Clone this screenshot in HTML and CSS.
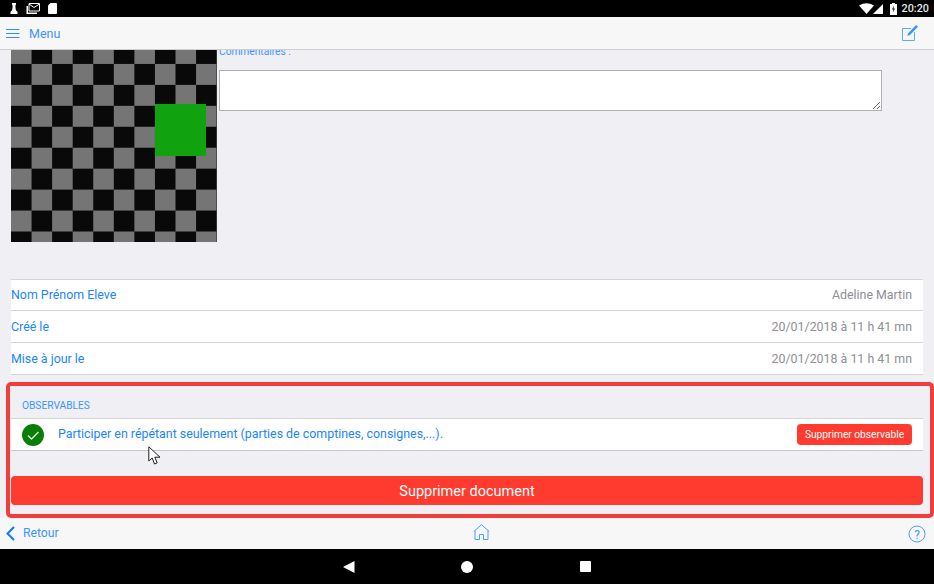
FILE: index.html
```html
<!DOCTYPE html>
<html lang="fr">
<head>
<meta charset="utf-8">
<title>Document</title>
<link rel="stylesheet" href="styles.css">
</head>
<body>
<div class="status">
  <div class="status-left">
    <svg class="ic" width="8" height="11" viewBox="0 0 8 11"><path fill="#fff" d="M2 0h4v1.5l-.7 1.2.5 4.3L7.500 9v2H.5V9l1.700-2 .5-4.300L2 1.500z"/></svg>
    <svg class="ic" width="14" height="11" viewBox="0 0 14 11"><path fill="none" stroke="#fff" d="M3 .5h10.500v7.500H3z"/><path fill="none" stroke="#fff" d="M3 1l5 3.500L13.500 1"/><path fill="#fff" d="M.5 3H2v6.500h9V11H.5z"/></svg>
    <svg class="ic" width="9" height="11" viewBox="0 0 9 11"><path fill="#fff" d="M2.500 0H8a1 1 0 0 1 1 1v9a1 1 0 0 1-1 1H1a1 1 0 0 1-1-1V2.500z"/></svg>
  </div>
  <div class="status-right">
    <svg width="15" height="11" viewBox="0 0 15 11"><path fill="#fff" d="M0 2.500Q7.500-2 15 2.500L7.500 11z"/></svg>
    <svg class="signal" width="10" height="10" viewBox="0 0 10 10"><path fill="#fff" d="M10 0v10H0z"/></svg>
    <svg class="battery" width="7" height="12" viewBox="0 0 7 12"><path fill="#fff" d="M2 0h3v1h2v11H0V1h2z"/><path fill="#222" d="M4 2.500 2 6.500h1.300L3 9.500l2-4H3.700z"/></svg>
    <span class="time">20:20</span>
  </div>
</div>

<header class="topbar">
  <div class="menu">
    <svg class="burger" width="14" height="9" viewBox="0 0 14 9"><path stroke="#2f90ff" fill="none" d="M0 .5h13.500M0 4.500h13.500M0 8.500h13.500"/></svg>
    <span>Menu</span>
  </div>
  <svg class="edit" width="17" height="17" viewBox="0 0 17 17"><path fill="none" stroke="#5aa8ff" d="M10 3.500H1.500v12h12V7"/><path fill="#3a96ff" d="M15 0l2 1.800L9 10l-2.700 1 .9-2.800z"/></svg>
</header>

<main class="content">
  <div class="top">
    <div class="board"><div class="marker"></div></div>
    <div class="comment">
      <label class="comment-label" for="c">Commentaires :</label>
      <textarea id="c" class="comment-input"></textarea>
    </div>
  </div>

  <ul class="info">
    <li class="info-row"><span>Nom Prénom Eleve</span><span class="value">Adeline Martin</span></li>
    <li class="info-row"><span>Créé le</span><span class="value">20/01/2018 à 11 h 41 mn</span></li>
    <li class="info-row"><span>Mise à jour le</span><span class="value">20/01/2018 à 11 h 41 mn</span></li>
  </ul>

  <section class="highlight">
    <h2 class="section-title">OBSERVABLES</h2>
    <div class="obs-row">
      <svg class="check" width="22" height="22" viewBox="0 0 22 22"><circle cx="11" cy="11" r="11" fill="#0a7d0a"/><path d="M6 11.500l3.500 3.500L16.500 8" fill="none" stroke="#d8ecd8" stroke-width="1.300"/></svg>
      <span class="obs-text">Participer en répétant seulement (parties de comptines, consignes,...).</span>
      <button class="obs-btn">Supprimer observable</button>
    </div>
    <svg class="cursor" width="14" height="20" viewBox="0 0 14 20"><path fill="#fff" stroke="#222" d="M.8.800V15l3.400-3 2.300 6 2.700-1.100-2.400-5.700H12z"/></svg>
    <button class="delete-btn">Supprimer document</button>
  </section>
</main>

<footer class="bottombar">
  <div class="back">
    <svg width="9" height="15" viewBox="0 0 9 15"><path d="M8 1 1.500 7.500 8 14" fill="none" stroke="#0a7dff" stroke-width="2"/></svg>
    <span class="back-label">Retour</span>
  </div>
  <svg class="home" width="17" height="16" viewBox="0 0 17 16"><path fill="none" stroke="#4a9fff" d="M.8 7.500 8.500.7l7.700 6.800M2 6.500v9h4.500v-5h4v5H15v-9"/></svg>
  <svg class="help" width="18" height="18" viewBox="0 0 18 18"><circle cx="9" cy="9" r="8" fill="none" stroke="#4a9fff"/><text x="9" y="13.500" text-anchor="middle" class="help-mark">?</text></svg>
</footer>

<nav class="sysnav">
  <svg width="12" height="12" viewBox="0 0 12 12"><path fill="#fff" d="M11.500 0v12L0 6z"/></svg>
  <span class="dot"></span>
  <span class="sq"></span>
</nav>
</body>
</html>
```
FILE: styles.css
```css
* { box-sizing: border-box; }
html, body { margin: 0; padding: 0; }
body {
  width: 934px;
  height: 584px;
  overflow: hidden;
  display: flex;
  flex-direction: column;
  font-family: Roboto, "Liberation Sans", sans-serif;
  color: #1a85ff;
  background: #efeff4;
}
.status {
  height: 17px;
  flex: none;
  background: #000;
  display: flex;
  justify-content: space-between;
  align-items: center;
  padding: 0 5px 0 10px;
}
.status-left { display: flex; align-items: center; gap: 8px; }
.status-right { display: flex; align-items: center; }
.signal { margin-left: -1px; }
.battery { margin-left: 7px; }
.time { margin-left: 5px; color: #e6e6e6; font-size: 10.800px; font-weight: 500; }
.topbar {
  height: 33px;
  flex: none;
  background: #f7f7f7;
  border-bottom: 1px solid #cfcfd2;
  display: flex;
  justify-content: space-between;
  align-items: center;
  padding: 0 16px 0 6px;
}
.menu { height: 16px; display: flex; align-items: center; gap: 9px; font-size: 12.500px; color: #3a96ff; }
.burger { align-self: flex-start; margin-top: 4px; }
.content { flex: none; height: 468px; overflow: hidden; }
.top { display: flex; padding-left: 11px; height: 192px; }
.board {
  position: relative;
  width: 206px;
  height: 192px;
  background: conic-gradient(#090909 25%, #757575 0 50%, #090909 0 75%, #757575 0) 0 -7px / 41.14px 41.9px;
}
.marker {
  position: absolute;
  left: 144px;
  top: 54px;
  width: 51px;
  height: 52px;
  background: #10a30f;
}
.comment { margin-left: 2px; display: flex; flex-direction: column; }
.comment-label { font-size: 10.200px; line-height: 12px; margin-top: -4px; color: #3a96ff; }
.comment-input {
  width: 663px;
  height: 41px;
  margin-top: 12px;
  background: #fff;
  border: 1px solid #b0b0b0;
  border-radius: 0;
  padding: 0;
}
.info {
  list-style: none;
  margin: 37px 11px 0;
  padding: 0;
  background: #fff;
  border-top: 1px solid #d4d4d6;
}
.info-row {
  height: 32px;
  display: flex;
  justify-content: space-between;
  align-items: center;
  font-size: 12.400px;
  padding-right: 11px;
  border-bottom: 1px solid #d4d4d6;
}
.info-row:first-child { height: 31px; padding-bottom: 1px; }
.value { color: #8e8e93; }
.highlight {
  position: relative;
  margin: 7px 0 0 6px;
  height: 136px;
  border: 4px solid #f23d3d;
  border-radius: 5px;
  padding: 14px 7px 0 1px;
}
.section-title {
  margin: 0 0 6px 11px;
  font-size: 10.200px;
  line-height: 12px;
  font-weight: 400;
  color: #3a96ff;
}
.obs-row {
  height: 33px;
  background: #fff;
  border-top: 1px solid #d4d4d6;
  border-bottom: 1px solid #c8c8cb;
  display: flex;
  align-items: center;
  padding: 0 11px;
}
.obs-text { margin-left: 14px; margin-bottom: 2px; font-size: 12.400px; flex: 1; }
.obs-btn {
  width: 115px;
  height: 21px;
  border: 0;
  border-radius: 4px;
  background: #ff3b30;
  color: #fff;
  font: 400 10.200px Roboto, sans-serif;
  padding: 0;
}
.cursor { position: absolute; left: 138px; top: 60px; }
.delete-btn {
  display: block;
  width: 100%;
  height: 29px;
  margin-top: 25px;
  border: 0;
  border-radius: 4px;
  background: #ff3b30;
  color: #fff;
  font: 400 14.500px Roboto, sans-serif;
  padding: 2px 0 0;
}
.bottombar {
  position: relative;
  height: 31px;
  flex: none;
  background: #f7f7f7;
  display: flex;
  justify-content: space-between;
  align-items: center;
  padding: 0 9px 0 6px;
}
.back { display: flex; align-items: center; gap: 8px; font-size: 12.200px; color: #3a96ff; }
.back-label { margin-bottom: 1px; }
.home { position: absolute; left: 473px; top: 6px; }
.help { margin-right: -0.5px; }
.help-mark { font: 400 12px Roboto, sans-serif; fill: #3a96ff; }
.sysnav {
  height: 35px;
  flex: none;
  background: #000;
  position: relative;
  display: flex;
  align-items: center;
  padding-left: 343px;
}
.dot { width: 12px; height: 12px; margin-left: 106px; border-radius: 50%; background: #fff; }
.sq { width: 11px; height: 11px; margin-left: 107px; border-radius: 1px; background: #fff; }
```
